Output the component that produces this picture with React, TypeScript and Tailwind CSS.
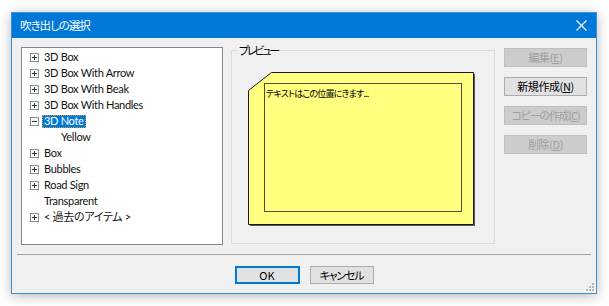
import React from 'react';

const jp = "font-['Noto_Sans_CJK_JP',sans-serif] [font-feature-settings:'palt']";
const latin = "font-['Lato','Noto_Sans_CJK_JP',sans-serif] [font-feature-settings:'palt']";

type Node = { label: string; box?: 'plus' | 'minus'; indent?: number; selected?: boolean };

const nodes: Node[] = [
  { label: '3D Box', box: 'plus' },
  { label: '3D Box With Arrow', box: 'plus' },
  { label: '3D Box With Beak', box: 'plus' },
  { label: '3D Box With Handles', box: 'plus' },
  { label: '3D Note', box: 'minus', selected: true },
  { label: 'Yellow', indent: 1 },
  { label: 'Box', box: 'plus' },
  { label: 'Bubbles', box: 'plus' },
  { label: 'Road Sign', box: 'plus' },
  { label: 'Transparent' },
  { label: '< 過去のアイテム >', box: 'plus' },
];

const ExpandBox: React.FC<{ kind: 'plus' | 'minus' }> = ({ kind }) => (
  <svg width="9" height="9" viewBox="0 0 9 9" className="block shrink-0">
    <rect x="0.5" y="0.5" width="8" height="8" fill="#f7f7f7" stroke="#8e8f8f" />
    <line x1="2" y1="4.5" x2="7" y2="4.5" stroke="#333" />
    {kind === 'plus' && <line x1="4.5" y1="2" x2="4.5" y2="7" stroke="#333" />}
  </svg>
);

const SideButton: React.FC<{ label: string; hot: string; disabled?: boolean; tight?: boolean }> = ({
  label,
  hot,
  disabled,
  tight,
}) => (
  <div
    className={`h-[19px] w-[83px] flex items-center justify-center border text-[11px] ${jp} ${
      tight ? 'tracking-[-1.2px]' : 'tracking-[-0.4px]'
    } ${disabled ? 'bg-[#cccccc] border-[#bfbfbf] text-[#a0a0a0]' : 'bg-[#e1e1e1] border-[#adadad] text-black'}`}
  >
    {label}(<span className="underline">{hot}</span>)
  </div>
);

const App: React.FC = () => {
  return (
    <div className="w-[609px] h-[306px] bg-white pt-[12px] pl-[11px]">
      <div className="relative w-[586px] h-[282px] border border-[#3c8fdb] bg-[#f0f0f0] flex flex-col shadow-[0_2px_12px_rgba(0,0,0,0.28)]">
        {/* title bar */}
        <div className="h-[25px] bg-[#0078d7] flex items-center justify-between pl-[8px] pr-[9px]">
          <span className={`text-white text-[11.5px] tracking-[-1px] ${jp}`}>吹き出しの選択</span>
          <svg width="11" height="11" viewBox="0 0 11 11">
            <path d="M0.5 0.5 L10.5 10.5 M10.5 0.5 L0.5 10.5" stroke="#fff" strokeWidth="1.1" />
          </svg>
        </div>

        <div className="flex items-start pt-[9px] pl-[9px]">
          {/* tree */}
          <div className="w-[202px] h-[198px] border border-[#828790] bg-white pt-[1px]">
            {nodes.map((n) => (
              <div key={n.label} className={`h-[16px] flex items-center text-[11px] tracking-[-0.3px] text-[#111] ${latin}`}>
                {n.box ? (
                  <div className="flex items-center pl-[8px]">
                    <ExpandBox kind={n.box} />
                    {n.selected ? (
                      <span className="ml-[3px] h-[13px] flex items-center px-[1px] bg-[#0078d7] text-white border border-dotted border-[#d49a3a]">
                        {n.label}
                      </span>
                    ) : (
                      <span className="ml-[5px]">{n.label}</span>
                    )}
                  </div>
                ) : (
                  <span className={n.indent ? 'pl-[39px]' : 'pl-[22px]'}>{n.label}</span>
                )}
              </div>
            ))}
          </div>

          {/* preview group */}
          <div className="relative ml-[8px] mt-[3px] w-[264px] h-[194px] border border-[#dcdcdc]">
            <span
              className={`absolute left-[6px] -top-[9px] px-[1px] bg-[#f0f0f0] text-[11px] tracking-[-2.2px] text-black ${jp}`}
            >
              プレビュー
            </span>
            <svg width="262" height="192" viewBox="0 0 262 192" className="block">
              <polygon points="18,41 41,23 243,23 243,175 18,175" fill="#5a5a5a" />
              <polygon points="16.5,39.5 39.5,21.5 241.5,21.5 241.5,173.5 16.5,173.5" fill="#ffff80" stroke="#1a1a1a" />
              <rect x="32.5" y="32.5" width="197" height="128" fill="#ffff80" stroke="#4d4d40" />
              <text
                x="34"
                y="46"
                fontSize="9"
                fill="#000"
                letterSpacing="-0.8"
                style={{ fontFamily: "'Noto Sans CJK JP', sans-serif", fontFeatureSettings: "'palt'" }}
              >
                テキストはこの位置にきます...
              </text>
            </svg>
          </div>

          {/* buttons */}
          <div className="ml-[9px] mt-[1px] flex flex-col gap-[10px]">
            <SideButton label="編集" hot="E" disabled />
            <SideButton label="新規作成" hot="N" />
            <SideButton label="コピーの作成" hot="C" disabled tight />
            <SideButton label="削除" hot="D" disabled />
          </div>
        </div>

        <div className="mt-[9px] mx-[5px] h-px bg-[#a0a0a0]" />

        <div className="mt-[11px] flex justify-center gap-[10px]">
          <div
            className={`w-[65px] h-[18px] flex items-center justify-center border-2 border-[#0078d7] bg-[#e1e1e1] text-[11px] text-black ${jp}`}
          >
            OK
          </div>
          <div
            className={`w-[64px] h-[18px] flex items-center justify-center border border-[#adadad] bg-[#e1e1e1] text-[11px] tracking-[-1.2px] text-black ${jp}`}
          >
            キャンセル
          </div>
        </div>

        {/* resize grip */}
        <svg width="8" height="8" viewBox="0 0 8 8" className="absolute right-[2px] bottom-[2px]">
          <rect x="6" y="0" width="2" height="2" fill="#b8b8b8" />
          <rect x="3" y="3" width="2" height="2" fill="#b8b8b8" />
          <rect x="6" y="3" width="2" height="2" fill="#b8b8b8" />
          <rect x="0" y="6" width="2" height="2" fill="#b8b8b8" />
          <rect x="3" y="6" width="2" height="2" fill="#b8b8b8" />
          <rect x="6" y="6" width="2" height="2" fill="#b8b8b8" />
        </svg>
      </div>
    </div>
  );
};

export default App;
